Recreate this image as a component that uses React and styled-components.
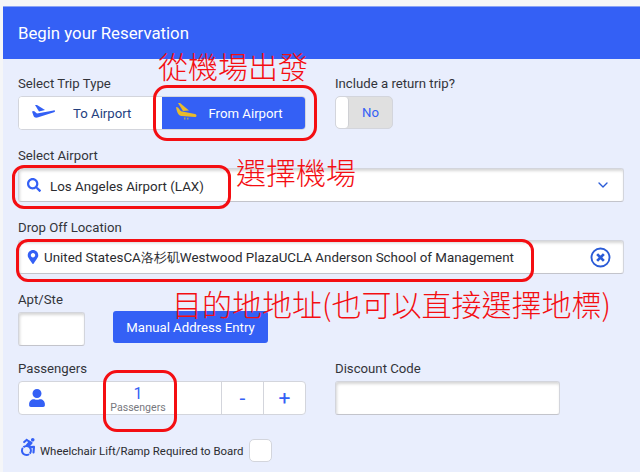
import React from 'react';
import styled, { createGlobalStyle } from 'styled-components';
import { FaSearch, FaMapMarkerAlt, FaUser, FaAccessibleIcon } from 'react-icons/fa';
import { ChevronDown } from 'lucide-react';

const GlobalStyle = createGlobalStyle`
  html, body {
    margin: 0;
    padding: 0;
    background: #f5f6f8;
  }
  body {
    font-family: Roboto, "Noto Sans", sans-serif;
    color: #2b2c30;
  }
`;

const Page = styled.div`
  position: relative;
  width: 640px;
  height: 472px;
  overflow: hidden;
  padding: 6px 0 0 3px;
  box-sizing: border-box;
`;

const Panel = styled.div`
  height: 466px;
  background: #e9eefd;
`;

const Header = styled.h1`
  margin: 0;
  height: 53px;
  box-sizing: border-box;
  padding: 0 0 0 15px;
  display: flex;
  align-items: center;
  background: #3460f5;
  border-top: 1px solid #8aa3f5;
  color: #fff;
  font-size: 16.8px;
  font-weight: 400;
`;

const Form = styled.div`
  padding: 17px 16px 0 15px;
  display: flex;
  flex-direction: column;
`;

const Row = styled.div`
  display: flex;
  gap: 29px;
  margin-top: ${({ $top }) => $top || 0}px;
`;

const Field = styled.div`
  width: ${({ $width }) => ($width ? `${$width}px` : 'auto')};
  flex: ${({ $width }) => ($width ? 'none' : 1)};
`;

const Label = styled.div`
  font-size: 13.2px;
  line-height: 15px;
  margin-bottom: 5px;
  margin-top: ${({ $top }) => $top || 0}px;
  color: #33343a;
`;

const Segments = styled.div`
  display: flex;
  height: 34px;
  width: 288px;
  box-sizing: border-box;
  background: #fff;
  border: 1px solid #d3d5dc;
  border-radius: 4px;
  overflow: hidden;
`;

const Segment = styled.div`
  flex: 1;
  display: flex;
  align-items: center;
  padding-left: ${({ $active }) => ($active ? 13 : 12)}px;
  gap: ${({ $gap }) => $gap}px;
  font-size: 13.2px;
  background: ${({ $active }) => ($active ? '#3460f5' : '#fff')};
  color: ${({ $active }) => ($active ? '#fff' : '#24407f')};
  svg {
    flex: none;
    margin-top: -3px;
  }
`;

const ReturnToggle = styled.div`
  width: 58px;
  height: 33px;
  box-sizing: border-box;
  display: flex;
  background: #e0e0e0;
  border: 1px solid #d3d5dc;
  border-radius: 5px;
  overflow: hidden;
`;

const Knob = styled.div`
  width: 12px;
  background: #fff;
  border-right: 1px solid #cfd0d4;
  border-radius: 4px;
`;

const ToggleText = styled.div`
  flex: 1;
  text-align: center;
  line-height: 31px;
  font-size: 13.2px;
  color: #3460f5;
`;

const InputBox = styled.div`
  height: 34px;
  width: ${({ $width }) => ($width ? `${$width}px` : '100%')};
  box-sizing: border-box;
  display: flex;
  align-items: center;
  background: #fff;
  border: 1px solid #d3d5dc;
  border-bottom-color: #c3c4cb;
  border-radius: 3px;
  box-shadow: inset 1px 2px 3px rgba(0, 0, 0, 0.16);
  padding: 0 12px 0 ${({ $pad }) => $pad || 0}px;
  font-size: 13.35px;
  color: #2b2c30;
  svg {
    color: #3460f5;
    flex: none;
  }
`;

const InputText = styled.span`
  flex: 1;
  margin-left: ${({ $gap }) => $gap}px;
  padding-top: 2px;
  white-space: nowrap;
`;

const ApartmentRow = styled.div`
  display: flex;
  align-items: flex-end;
  gap: 28px;
  margin-top: 18px;
`;

const ManualButton = styled.button`
  width: 155px;
  height: 32px;
  margin-bottom: 3px;
  border: 0;
  border-radius: 3px;
  background: #3460f5;
  color: #fff;
  font: 400 13.2px Roboto, sans-serif;
`;

const Stepper = styled.div`
  height: 34px;
  width: 288px;
  box-sizing: border-box;
  display: flex;
  align-items: center;
  background: #fff;
  border: 1px solid #d3d5dc;
  border-radius: 4px;
  color: #3460f5;
`;

const PersonIcon = styled.div`
  width: 76px;
  padding-left: 9px;
  box-sizing: border-box;
  font-size: 18px;
  display: flex;
`;

const Count = styled.div`
  width: 86px;
  margin-right: auto;
  text-align: center;
  font-size: 16px;
  line-height: 16px;
  margin-top: 4px;
  small {
    display: block;
    font-size: 10.6px;
    line-height: 12px;
    color: #77787e;
  }
`;

const StepButton = styled.div`
  width: 41px;
  height: 100%;
  display: flex;
  align-items: center;
  justify-content: center;
  border-left: 1px solid #d3d5dc;
  font-size: 21px;
`;

const WheelchairRow = styled.div`
  display: flex;
  align-items: center;
  margin-top: 24px;
  margin-left: 1px;
  font-size: 11.4px;
  color: #2b2c30;
  svg {
    color: #3460f5;
    font-size: 18px;
    margin-right: 3px;
    margin-top: -7px;
  }
`;

const CheckBox = styled.div`
  width: 23px;
  height: 23px;
  box-sizing: border-box;
  margin-left: 6px;
  background: #fff;
  border: 1px solid #d3d5dc;
  border-radius: 5px;
`;

const Ring = styled.div`
  position: absolute;
  left: ${({ $x }) => $x}px;
  top: ${({ $y }) => $y}px;
  width: ${({ $w }) => $w}px;
  height: ${({ $h }) => $h}px;
  box-sizing: border-box;
  border: 3px solid #f40e12;
  border-radius: ${({ $r }) => $r}px;
`;

const Note = styled.div`
  position: absolute;
  left: ${({ $x }) => $x}px;
  top: ${({ $y }) => $y}px;
  color: #f40e12;
  font-family: "Noto Sans CJK TC", sans-serif;
  font-weight: 300;
  font-size: 30px;
  line-height: 34px;
  white-space: nowrap;
`;

const TakeoffPlane = () => (
  <svg width="25" height="14" viewBox="0 0 25 14" fill="#3460f5">
    <path d="M1 6.500l2-.5 3 2.600 16.600-3.200c1.800-.3 2 1.400.4 1.900L6.500 12.600c-2 .5-3.300-.3-3.900-1.500z" />
    <path d="M4 0h2l8 5-6 1.600z" />
  </svg>
);

const LandingPlane = () => (
  <svg width="22" height="17" viewBox="0 0 22 17" fill="#e8bb2c">
    <path d="M1 4l2 .6 3 3.600 14 2.800c2 .5 2 3 0 3L6.500 13C3.500 12.500 2 10 1 4z" />
    <path d="M3 0h2l9 7.500-6 .5z" />
    <path d="M9 14.500h1.500V16.500H9zM12 14.800h1.500V16.500H12z" fill="#a9a66b" />
  </svg>
);

const ClearIcon = () => (
  <svg width="21" height="21" viewBox="0 0 20 20" fill="none">
    <circle cx="10" cy="10" r="8.600" stroke="#2a5bd7" strokeWidth="1.800" />
    <path d="M6.800 6.800l6.400 6.400M13.200 6.800l-6.400 6.400" stroke="#2a5bd7" strokeWidth="2.600" />
  </svg>
);

const App = () => (
  <Page>
    <GlobalStyle />
    <Panel>
      <Header>Begin your Reservation</Header>
      <Form>
        <Row>
          <Field $width={288}>
            <Label>Select Trip Type</Label>
            <Segments>
              <Segment $gap={17}><TakeoffPlane />To Airport</Segment>
              <Segment $active $gap={12}><LandingPlane />From Airport</Segment>
            </Segments>
          </Field>
          <Field>
            <Label>Include a return trip?</Label>
            <ReturnToggle>
              <Knob />
              <ToggleText>No</ToggleText>
            </ReturnToggle>
          </Field>
        </Row>
        <Field>
          <Label $top={18}>Select Airport</Label>
          <InputBox $pad={8}>
            <FaSearch size={14} />
            <InputText $gap={9}>Los Angeles Airport (LAX)</InputText>
            <ChevronDown size={16} color="#2a5bd7" />
          </InputBox>
        </Field>
        <Field>
          <Label $top={18}>Drop Off Location</Label>
          <InputBox $pad={7}>
            <FaMapMarkerAlt size={14} />
            <InputText $gap={4}>United StatesCA洛杉矶Westwood PlazaUCLA Anderson School of Management</InputText>
            <ClearIcon />
          </InputBox>
        </Field>
        <ApartmentRow>
          <Field $width={67}>
            <Label>Apt/Ste</Label>
            <InputBox $width={67} />
          </Field>
          <ManualButton>Manual Address Entry</ManualButton>
        </ApartmentRow>
        <Row $top={15}>
          <Field $width={288}>
            <Label>Passengers</Label>
            <Stepper>
              <PersonIcon><FaUser /></PersonIcon>
              <Count>1<small>Passengers</small></Count>
              <StepButton>-</StepButton>
              <StepButton>+</StepButton>
            </Stepper>
          </Field>
          <Field>
            <Label>Discount Code</Label>
            <InputBox $width={225} />
          </Field>
        </Row>
        <WheelchairRow>
          <FaAccessibleIcon />
          Wheelchair Lift/Ramp Required to Board
          <CheckBox />
        </WheelchairRow>
      </Form>
    </Panel>
    <Ring $x={153} $y={85} $w={164} $h={56} $r={14} />
    <Ring $x={12} $y={165} $w={219} $h={44} $r={12} />
    <Ring $x={16} $y={239} $w={518} $h={43} $r={12} />
    <Ring $x={103} $y={370} $w={74} $h={62} $r={14} />
    <Note $x={158} $y={48}>從機場出發</Note>
    <Note $x={236} $y={154}>選擇機場</Note>
    <Note $x={172} $y={286}>目的地地址(也可以直接選擇地標)</Note>
  </Page>
);

export default App;
